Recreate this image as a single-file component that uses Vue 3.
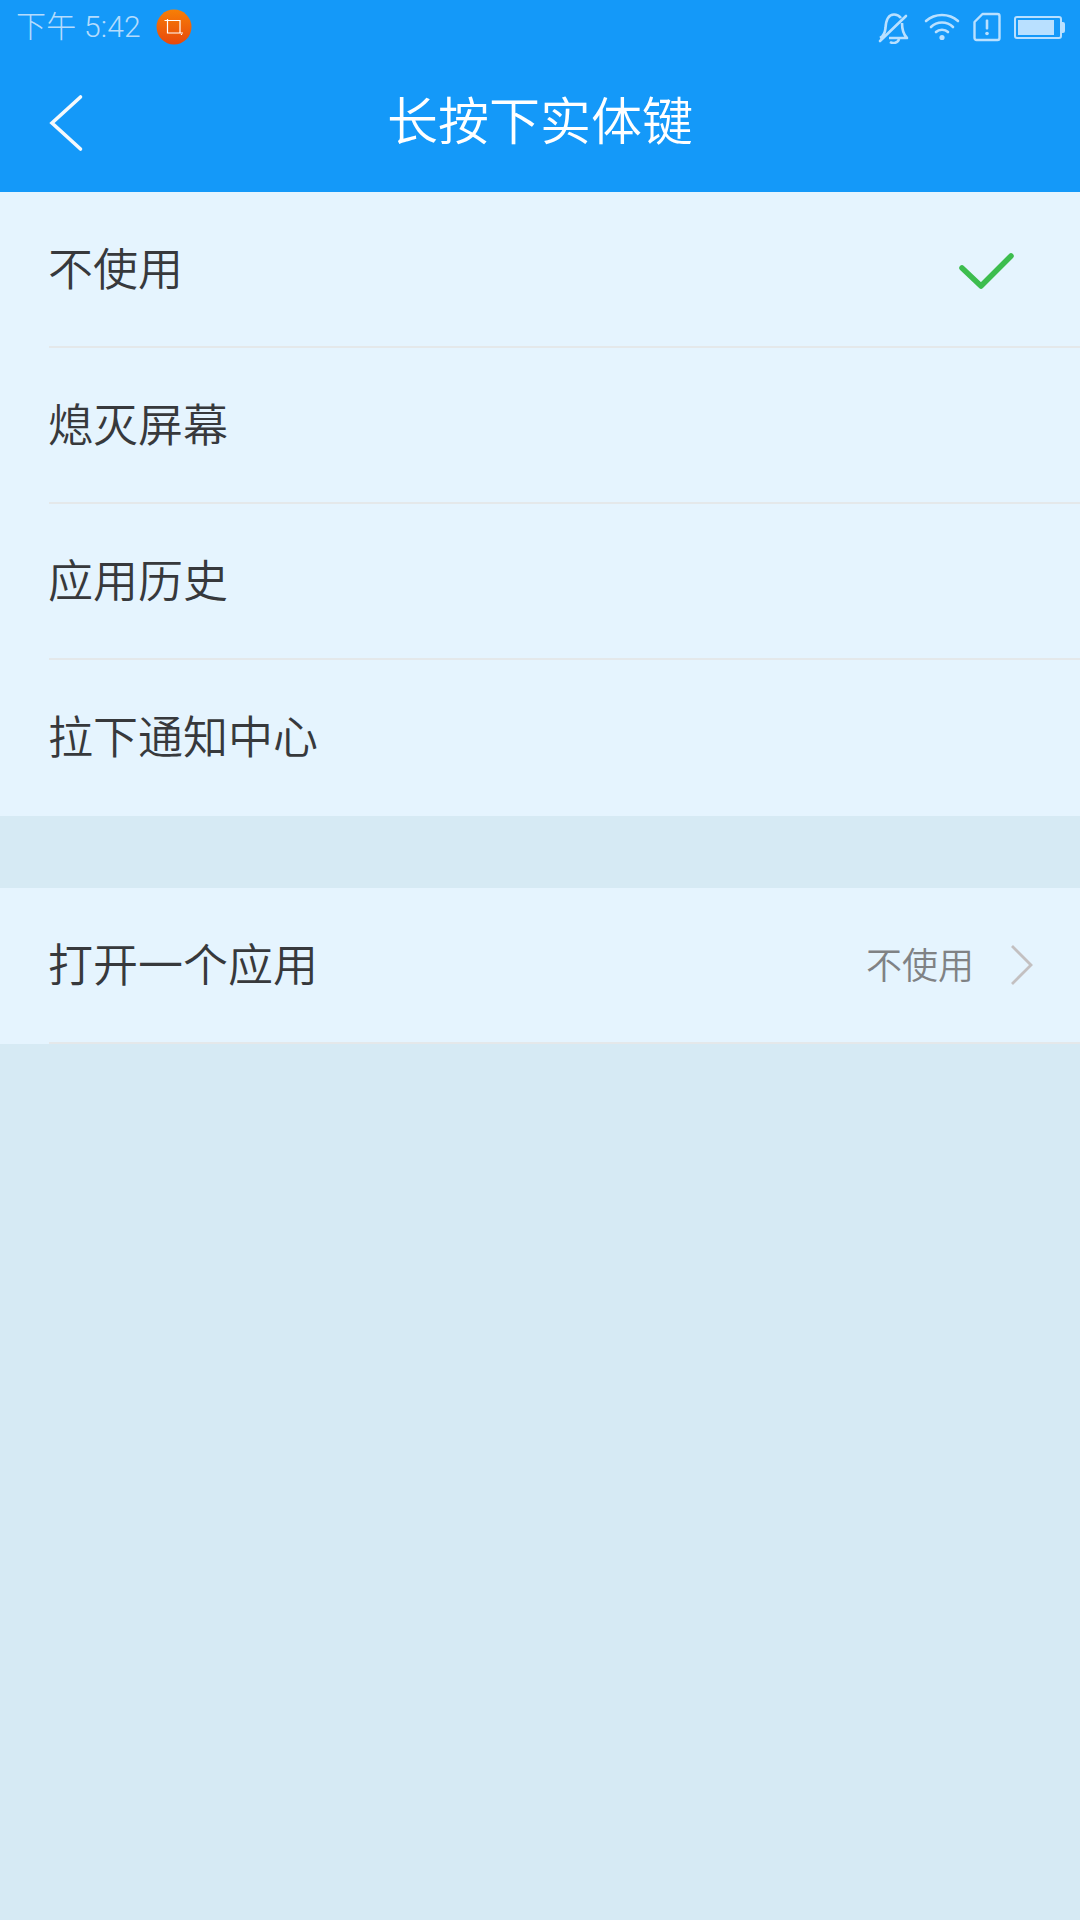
<script setup>
const rows = [
  { label: '不使用', checked: true },
  { label: '熄灭屏幕' },
  { label: '应用历史' },
  { label: '拉下通知中心' },
]
</script>

<template>
  <div class="page">
    <header class="head">
      <div class="status">
        <div class="status-left">
          <span class="clock">下午 5:42</span>
          <svg class="crop" width="36" height="36" viewBox="0 0 36 36">
            <defs>
              <linearGradient id="cropg" x1="0" y1="0" x2="0" y2="1">
                <stop offset="0" stop-color="#f77f06" />
                <stop offset="1" stop-color="#e8480c" />
              </linearGradient>
            </defs>
            <circle cx="18" cy="18" r="17.500" fill="url(#cropg)" />
            <path d="M8.500 11.500H24V24M11.500 10V24H24M24 24h3M25.500 25v1" fill="none" stroke="#fff" stroke-width="1.200" />
          </svg>
        </div>
        <div class="status-right">
          <svg width="32" height="34" viewBox="0 0 32 34" fill="none" stroke="#b9e0ff" stroke-width="2.600">
            <path d="M3 28c4-2 5-5 5.500-10C9 10 12 4.500 17 4.500c3 0 5 1 7 3.500M25 13c0 6 1 11 5 15H12" stroke-linejoin="round" />
            <path d="M3 31 29 6" stroke-linecap="round" />
            <path d="M13 32c3 2 8 1 9-3" />
          </svg>
          <svg class="wifi" width="36" height="30" viewBox="0 0 36 30" fill="none" stroke="#b9e0ff" stroke-width="2.600" stroke-linecap="round">
            <path d="M2 9c9-8 23-8 32 0" />
            <path d="M7 15c6-6 16-6 22 0" />
            <path d="M12 20c3-3 9-3 12 0" />
            <circle cx="18" cy="25.500" r="2.600" fill="#b9e0ff" stroke="none" />
          </svg>
          <svg width="28" height="30" viewBox="0 0 28 30" fill="none">
            <path d="M9.500 2H24.500a2 2 0 0 1 2 2V26a2 2 0 0 1-2 2H3.500a2 2 0 0 1-2-2V10z" stroke="#b9e0ff" stroke-width="2.400" stroke-linejoin="round" />
            <rect x="12.700" y="7.500" width="2.600" height="10" rx="1" fill="#b9e0ff" />
            <circle cx="14" cy="21.500" r="1.800" fill="#b9e0ff" />
          </svg>
          <div class="battery"><div class="battery-fill"></div></div>
        </div>
      </div>
      <div class="nav">
        <svg class="back" width="36" height="58" viewBox="0 0 36 58" fill="none">
          <path d="M32.500 3 4 29 32.500 55" stroke="#f5f9fc" stroke-width="3.600" stroke-linecap="round" stroke-linejoin="miter" />
        </svg>
        <h1 class="title">长按下实体键</h1>
      </div>
    </header>

    <section class="group">
      <div v-for="row in rows" :key="row.label" class="row">
        <span class="label">{{ row.label }}</span>
        <svg v-if="row.checked" class="check" width="56" height="40" viewBox="0 0 56 40" fill="none">
          <path d="M4 19 23 37 53 7" stroke="#3dbd4e" stroke-width="5.500" stroke-linecap="round" stroke-linejoin="round" />
        </svg>
      </div>
    </section>

    <section class="group second">
      <div class="row">
        <span class="label">打开一个应用</span>
        <span class="value">不使用</span>
        <svg class="chev" width="24" height="42" viewBox="0 0 24 42" fill="none">
          <path d="M2 2 21 21 2 40" stroke="#c3c0c1" stroke-width="2.800" />
        </svg>
      </div>
    </section>
  </div>
</template>

<style scoped>
.page {
  width: 1080px;
  height: 1920px;
  background: #d6eaf4;
  font-family: "Noto Sans CJK SC", "Noto Sans", sans-serif;
  overflow: hidden;
}
.head {
  height: 192px;
  background: #1499f9;
  display: flex;
  flex-direction: column;
}
.status {
  height: 54px;
  display: flex;
  align-items: center;
  justify-content: space-between;
  padding: 0 15px 0 16px;
}
.status-left {
  display: flex;
  align-items: center;
  gap: 15px;
}
.clock {
  font-family: Roboto, "Noto Sans CJK SC", sans-serif;
  font-size: 30px;
  font-weight: 300;
  letter-spacing: 0.2px;
  color: #b4dcfd;
  line-height: 54px;
  padding-bottom: 5px;
  height: 49px;
}
.crop {
  display: block;
}
.status-right {
  display: flex;
  align-items: center;
  gap: 13px;
}
.status-right svg {
  display: block;
}
.status-right .wifi {
  margin-left: 2px;
}
.battery {
  width: 48px;
  height: 23px;
  border: 2px solid #b9e0ff;
  border-radius: 3px;
  padding: 2px;
  box-sizing: border-box;
  margin-right: 3px;
  position: relative;
  display: flex;
}
.battery::after {
  content: "";
  position: absolute;
  right: -5px;
  top: 4px;
  width: 3px;
  height: 11px;
  background: #b9e0ff;
  border-radius: 0 2px 2px 0;
}
.battery-fill {
  width: 36px;
  background: #b9e0ff;
}
.nav {
  flex: 1;
  display: flex;
  align-items: center;
  justify-content: center;
  position: relative;
}
.back {
  position: absolute;
  left: 48px;
  top: 40px;
  display: block;
}
.title {
  margin: 0;
  font-size: 51px;
  font-weight: 350;
  color: #ffffff;
  line-height: 1;
  position: relative;
  top: -5px;
}
.group {
  background: #e5f4fe;
  padding-left: 49px;
}
.second {
  margin-top: 72px;
}
.row {
  height: 156px;
  box-sizing: border-box;
  display: flex;
  align-items: center;
  border-bottom: 2px solid #e4e8ea;
}
.group:first-of-type .row:last-child {
  border-bottom-color: transparent;
}
.label {
  flex: 1;
  font-size: 45px;
  font-weight: 350;
  color: #37393c;
  line-height: 1;
  margin-left: -1px;
  padding-bottom: 5px;
}
.check {
  display: block;
  margin-right: 66px;
}
.value {
  font-size: 36px;
  font-weight: 350;
  color: #808284;
  line-height: 1;
  margin-right: 36px;
  padding-bottom: 4px;
}
.chev {
  display: block;
  margin-right: 46px;
}
</style>
